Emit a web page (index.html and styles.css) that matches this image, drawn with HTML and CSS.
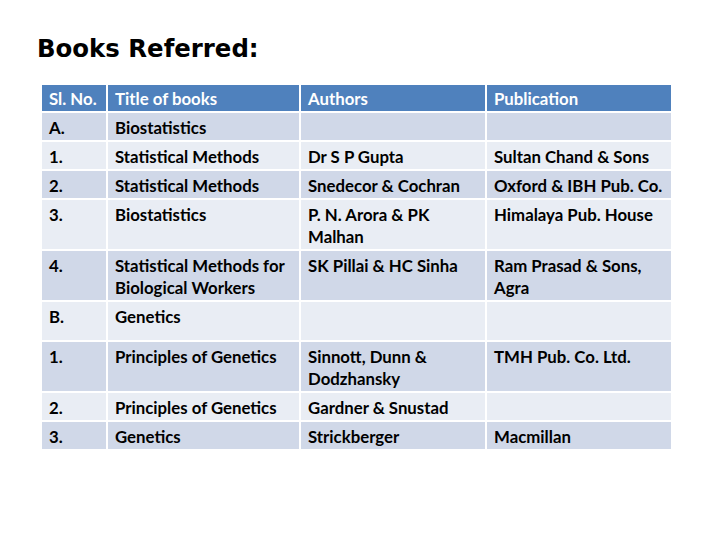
FILE: index.html
```
<!DOCTYPE html>
<html>
<head>
<meta charset="utf-8">
<link rel="stylesheet" href="styles.css">
</head>
<body>
<h1 class="title">Books Referred:</h1>
<table class="books">
  <colgroup>
    <col class="c1"><col class="c2"><col class="c3"><col class="c4">
  </colgroup>
  <thead>
    <tr><th>Sl. No.</th><th>Title of books</th><th>Authors</th><th>Publication</th></tr>
  </thead>
  <tbody>
    <tr class="dark"><td>A.</td><td>Biostatistics</td><td></td><td></td></tr>
    <tr class="light"><td>1.</td><td>Statistical Methods</td><td>Dr S P Gupta</td><td>Sultan Chand &amp; Sons</td></tr>
    <tr class="dark"><td>2.</td><td>Statistical Methods</td><td>Snedecor &amp; Cochran</td><td>Oxford &amp; IBH Pub. Co.</td></tr>
    <tr class="light"><td>3.</td><td>Biostatistics</td><td>P. N. Arora &amp; PK Malhan</td><td>Himalaya Pub. House</td></tr>
    <tr class="dark"><td>4.</td><td>Statistical Methods for Biological Workers</td><td>SK Pillai &amp; HC Sinha</td><td>Ram Prasad &amp; Sons, Agra</td></tr>
    <tr class="light tall"><td>B.</td><td>Genetics</td><td></td><td></td></tr>
    <tr class="dark"><td>1.</td><td>Principles of Genetics</td><td>Sinnott, Dunn &amp; Dodzhansky</td><td>TMH Pub. Co. Ltd.</td></tr>
    <tr class="light"><td>2.</td><td>Principles of Genetics</td><td>Gardner &amp; Snustad</td><td></td></tr>
    <tr class="dark"><td>3.</td><td>Genetics</td><td>Strickberger</td><td>Macmillan</td></tr>
  </tbody>
</table>
</body>
</html>
```
FILE: styles.css
```
html, body {
  margin: 0;
  padding: 0;
  background: #ffffff;
}
body {
  width: 720px;
  height: 540px;
  overflow: hidden;
}
.title {
  margin: 0;
  padding: 34px 0 0 37px;
  height: 50px;
  box-sizing: border-box;
  font-family: "DejaVu Sans", sans-serif;
  font-weight: bold;
  font-size: 24.4px;
  line-height: 30px;
  color: #000;
}
.books {
  margin: 33px 0 0 40px;
  border-collapse: separate;
  border-spacing: 2px;
  table-layout: fixed;
  width: 633px;
  font-family: Lato, "Noto Sans", sans-serif;
  font-size: 16.8px;
  font-weight: bold;
  color: #000;
}
.c1 { width: 64px; }
.c2 { width: 191px; }
.c3 { width: 184px; }
.c4 { width: 184px; }
.books th, .books td {
  text-align: left;
  vertical-align: top;
  padding: 4px 7px 1px 7px;
  line-height: 22px;
}
.books th {
  background: #4f81bd;
  color: #ffffff;
  padding-top: 3px;
  height: 22px;
}
.books td {
  height: 22px;
}
.dark td { background: #d0d8e8; }
.light td { background: #e9edf4; }
.tall td { height: 33px; }
```
